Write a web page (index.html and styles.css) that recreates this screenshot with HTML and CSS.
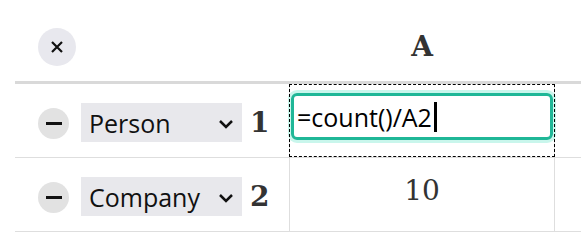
FILE: index.html
```html
<!DOCTYPE html>
<html lang="en">
<head>
  <meta charset="UTF-8">
  <meta name="viewport" content="width=device-width, initial-scale=1.0">
  <title>Sheet</title>
  <link rel="stylesheet" href="styles.css">
</head>
<body>

<div class="sheet">
  <div class="row header-row">
    <div class="row-head">
      <button class="round-btn close-btn">
        <svg width="14" height="14" viewBox="0 0 14 14"><path d="M2 2 L12 12 M12 2 L2 12" stroke="#111" stroke-width="2.2" fill="none"/></svg>
      </button>
    </div>
    <div class="cell col-title">A</div>
    <div class="cell"></div>
  </div>

  <div class="row">
    <div class="row-head">
      <button class="round-btn minus-btn"><span class="minus"></span></button>
      <div class="type-select">
        <span>Person</span>
        <svg width="16" height="10" viewBox="0 0 16 10"><polyline points="2,2 8,8 14,2" fill="none" stroke="#111" stroke-width="2.5"/></svg>
      </div>
      <span class="row-num">1</span>
    </div>
    <div class="cell data-cell selected">
      <div class="formula-input">=count()/A2<span class="caret"></span></div>
    </div>
    <div class="cell"></div>
  </div>

  <div class="row">
    <div class="row-head">
      <button class="round-btn minus-btn"><span class="minus"></span></button>
      <div class="type-select">
        <span>Company</span>
        <svg width="16" height="10" viewBox="0 0 16 10"><polyline points="2,2 8,8 14,2" fill="none" stroke="#111" stroke-width="2.5"/></svg>
      </div>
      <span class="row-num">2</span>
    </div>
    <div class="cell data-cell value">10</div>
    <div class="cell"></div>
  </div>
</div>

</body>
</html>
```

FILE: styles.css
```css
body {
  margin: 0;
  padding: 0;
  background-color: #ffffff;
  font-family: "Open Sans", "Noto Sans", sans-serif;
  overflow: hidden;
}

.sheet {
  margin-left: 15px;
}

.row {
  display: grid;
  grid-template-columns: 274px 266px 1fr;
  height: 74px;
  border-bottom: 1px solid #dedede;
  box-sizing: border-box;
}

.header-row {
  height: 84px;
  border-bottom: 3px solid #d9d9d9;
}

.row-head {
  display: flex;
  align-items: center;
  padding: 4px 0 0 23px;
}

.header-row .row-head {
  align-items: flex-start;
  padding-top: 28px;
}

.round-btn {
  border: none;
  border-radius: 50%;
  padding: 0;
  display: flex;
  align-items: center;
  justify-content: center;
  cursor: pointer;
}

.close-btn {
  width: 38px;
  height: 38px;
  background-color: #e8e8ee;
}

.minus-btn {
  width: 31px;
  height: 31px;
  background-color: #e2e2e2;
  margin-top: 2px;
}

.minus {
  width: 16px;
  height: 3px;
  background-color: #111;
}

.type-select {
  display: flex;
  align-items: center;
  justify-content: space-between;
  width: 161px;
  height: 39px;
  margin-left: 12px;
  padding: 0 8px 0 8px;
  box-sizing: border-box;
  background-color: #e8e8ec;
  font-size: 25px;
  color: #111;
}

.type-select svg {
  margin-top: 2px;
}

.row-num {
  margin-left: 8px;
  font-family: "DejaVu Serif", serif;
  font-weight: bold;
  font-size: 28px;
  color: #333;
}

.cell {
  box-sizing: border-box;
}

.col-title {
  text-align: center;
  padding-top: 30px;
  font-family: "DejaVu Serif", serif;
  font-weight: bold;
  font-size: 28px;
  color: #333;
}

.data-cell {
  border-left: 1px solid #dedede;
  border-right: 1px solid #dedede;
}

.selected {
  outline: 1px dashed #000;
  outline-offset: -1px;
  padding: 9px 1px 0 1px;
}

.formula-input {
  display: flex;
  align-items: center;
  height: 47px;
  padding-left: 3px;
  border: 3px solid #1fb797;
  border-radius: 6px;
  box-shadow: 0 0 0 3px #c9f6ec;
  box-sizing: border-box;
  font-size: 25px;
  color: #000;
}

.caret {
  width: 3px;
  height: 30px;
  margin-left: 2px;
  background-color: #000;
}

.value {
  text-align: center;
  padding-top: 16px;
  font-family: "DejaVu Serif", serif;
  font-size: 28px;
  color: #333;
}
```
